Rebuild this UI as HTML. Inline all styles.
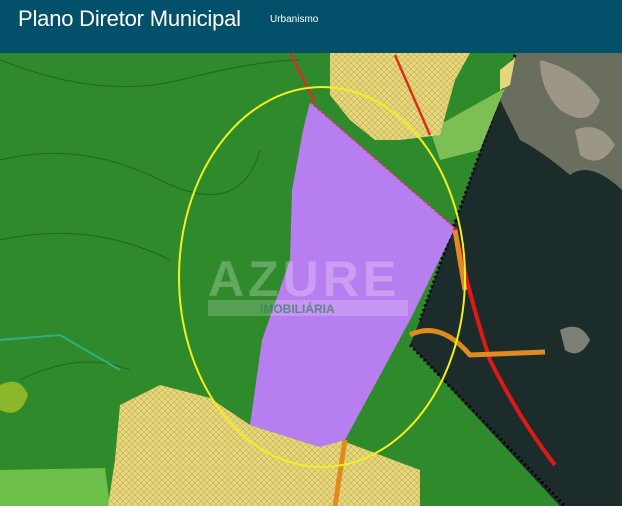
<!DOCTYPE html>
<html><head><meta charset="utf-8"><style>
body{margin:0;width:622px;height:506px;overflow:hidden;font-family:"Liberation Sans",sans-serif}
.h{position:absolute;left:0;top:0;width:622px;height:53px;background:#03506b;color:#fff}
.t{position:absolute;left:18px;top:6px;font-size:22px;letter-spacing:-0.2px}
.s{position:absolute;left:270px;top:14px;font-size:10px}
</style></head><body>
<svg width="622" height="506" style="position:absolute;left:0;top:0">
<defs>
<pattern id="x" width="6" height="6" patternUnits="userSpaceOnUse"><path d="M0 0L6 6M6 0L0 6" stroke="#b8a050" stroke-width="0.5"/></pattern>
</defs>
<rect width="622" height="506" fill="#2e8a2a"/>
<path d="M0 60 Q100 100 180 80 T300 60 M0 160 Q80 140 160 180 T260 150 M0 240 Q90 220 170 260 M20 380 Q80 350 130 370" stroke="#1e6a1e" fill="none" stroke-width="1"/>
<path d="M0 470 L105 468 L110 506 L0 506Z" fill="#6cc04a"/>
<path d="M0 385 Q20 375 28 395 Q20 420 0 410Z" fill="#8ab82a"/>
<path d="M515 53 L622 53 L622 506 L560 506 L410 345 L420 320Z" fill="#1c2c2a"/>
<path d="M515 53 L622 53 L622 190 Q590 160 570 175 Q540 150 520 140 L500 100Z" fill="#6a6e5e"/>
<path d="M540 60 Q580 70 600 100 Q590 130 560 110 Q540 90 540 60Z M575 130 Q600 120 615 145 Q600 170 580 155Z" fill="#a8a08e" opacity=".8"/>
<path d="M560 330 Q580 320 590 340 Q580 360 565 350Z" fill="#a8a498" opacity=".7"/>
<path d="M515 55 L420 320 M410 345 L565 506" stroke="#000" stroke-width="3" stroke-dasharray="2 3"/>
<path d="M430 130 L505 88 L480 150 L440 160Z" fill="#7cc055"/>
<path d="M330 53 L470 53 L455 80 L440 135 L400 140 L375 140 L350 120 L330 95Z" fill="#e6d67a"/>
<path d="M330 53 L470 53 L455 80 L440 135 L400 140 L375 140 L350 120 L330 95Z" fill="url(#x)"/>
<path d="M500 70 L515 58 L510 85 L500 90Z" fill="#e6d67a"/>
<path d="M120 405 L160 385 L210 398 L250 425 L320 447 L335 438 L420 470 L420 506 L108 506 L115 460Z" fill="#e6d67a"/>
<path d="M120 405 L160 385 L210 398 L250 425 L320 447 L335 438 L420 470 L420 506 L108 506 L115 460Z" fill="url(#x)"/>
<path d="M310 102 L455 228 L410 320 L345 440 L320 447 L250 425 L262 340 L290 260 L292 190 L303 130Z" fill="#b77ef0"/>
<path d="M310 102 L455 228" stroke="#e0306a" stroke-width="1.5" stroke-dasharray="3 2"/>
<path d="M290 53 L315 102 M395 55 L430 135" stroke="#d83020" stroke-width="2.5"/>
<path d="M455 228 Q470 300 490 360 Q520 420 555 465" stroke="#e01818" stroke-width="4" fill="none"/>
<path d="M410 335 Q440 320 470 355 L545 352 M455 230 L465 290 M345 440 L335 506" stroke="#e08a20" stroke-width="5" fill="none"/>
<path d="M0 340 L60 335 L120 370" stroke="#30b080" stroke-width="2" fill="none"/>
<ellipse cx="322" cy="277" rx="143" ry="190" fill="none" stroke="#f0f020" stroke-width="2"/>
<rect x="208" y="300" width="200" height="16" fill="#fff" opacity=".2"/>
<text x="208" y="296" font-family="Liberation Sans" font-weight="bold" font-size="50" fill="#fff" opacity=".25" letter-spacing="4">AZURE</text>
<text x="260" y="313" font-family="Liberation Sans" font-weight="bold" font-size="12" fill="#3a7a5a" opacity=".7">IMOBILIÁRIA</text>
</svg>
<div class="h"><div class="t">Plano Diretor Municipal</div><div class="s">Urbanismo</div></div>
</body></html>
